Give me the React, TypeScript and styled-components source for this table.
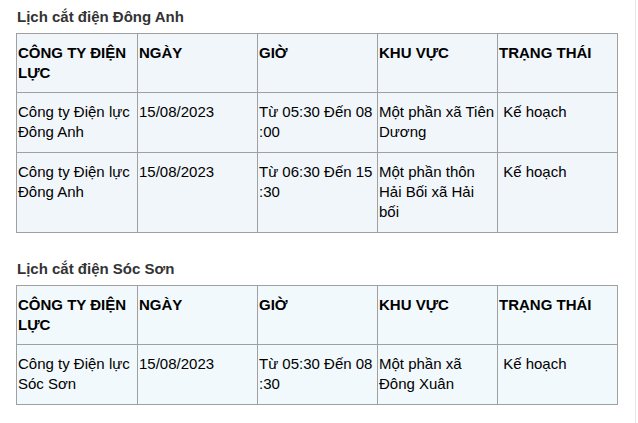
import styled, { createGlobalStyle } from "styled-components";

const GlobalStyle = createGlobalStyle`
  body {
    margin: 0;
    background: #ffffff;
    font-family: "Liberation Sans", Arial, sans-serif;
  }
`;

const Page = styled.div`
  width: 619px;
  min-height: 423px;
  padding: 7px 0 0 16px;
  border-right: 1px solid #e8e8e8;
  box-sizing: content-box;
`;

const Section = styled.section`
  margin-bottom: 26px;
`;

const Title = styled.h3`
  margin: 0 0 6px 1px;
  font-size: 15px;
  line-height: 20px;
  font-weight: bold;
  color: #333333;
`;

const Table = styled.table<{ $bg: string }>`
  width: 602px;
  table-layout: fixed;
  border-collapse: collapse;
  background: ${(p) => p.$bg};
  font-size: 15px;
  line-height: 20px;
  color: #000000;
`;

const Col = styled.col<{ $w?: number }>`
  width: ${(p) => (p.$w ? `${p.$w}px` : "auto")};
`;

const Head = styled.th`
  padding: 9px 1px;
  border: 1px solid #a0a0a0;
  text-align: left;
  vertical-align: top;
  font-weight: bold;
`;

const Cell = styled.td`
  padding: 9px 1px 10px;
  border: 1px solid #a0a0a0;
  vertical-align: top;
  font-weight: normal;
`;

type Row = [string, string, string, string, string];

type Schedule = {
  title: string;
  bg: string;
  rows: Row[];
};

const headers = ["CÔNG TY ĐIỆN LỰC", "NGÀY", "GIỜ", "KHU VỰC", "TRẠNG THÁI"];
const widths = [121, 120, 120, 120, 0];

const schedules: Schedule[] = [
  {
    title: "Lịch cắt điện Đông Anh",
    bg: "#f1f6fb",
    rows: [
      ["Công ty Điện lực Đông Anh", "15/08/2023", "Từ 05:30 Đến 08\u200B:00", "Một phần xã Tiên Dương", "\u00a0Kế hoạch"],
      ["Công ty Điện lực Đông Anh", "15/08/2023", "Từ 06:30 Đến 15\u200B:30", "Một phần thôn Hải Bối xã Hải bối", "\u00a0Kế hoạch"],
    ],
  },
  {
    title: "Lịch cắt điện Sóc Sơn",
    bg: "#f1f9fc",
    rows: [
      ["Công ty Điện lực Sóc Sơn", "15/08/2023", "Từ 05:30 Đến 08\u200B:30", "Một phần xã Đông Xuân", "\u00a0Kế hoạch"],
    ],
  },
];

export default function App() {
  return (
    <>
      <GlobalStyle />
      <Page>
        {schedules.map((s) => (
          <Section key={s.title}>
            <Title>{s.title}</Title>
            <Table $bg={s.bg}>
              <colgroup>
                {widths.map((w, i) => (
                  <Col key={i} $w={w || undefined} />
                ))}
              </colgroup>
              <thead>
                <tr>
                  {headers.map((h) => (
                    <Head key={h}>{h}</Head>
                  ))}
                </tr>
              </thead>
              <tbody>
                {s.rows.map((r, i) => (
                  <tr key={i}>
                    {r.map((c, j) => (
                      <Cell key={j}>{c}</Cell>
                    ))}
                  </tr>
                ))}
              </tbody>
            </Table>
          </Section>
        ))}
      </Page>
    </>
  );
}
